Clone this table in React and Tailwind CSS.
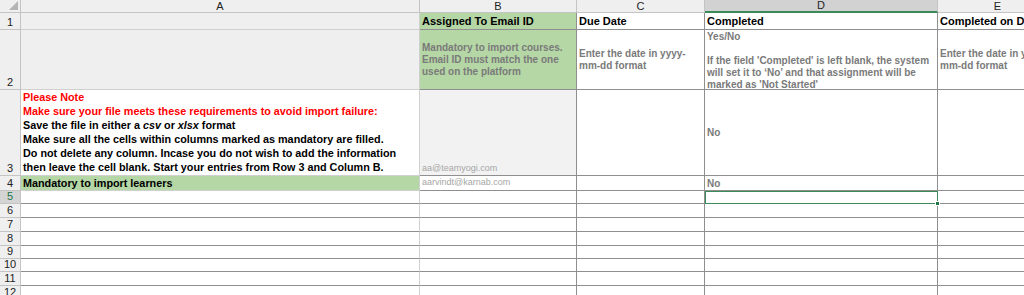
import React from "react";

const font = { fontFamily: '"Liberation Sans", Arial, sans-serif' };

const cols = ["A", "B", "C", "D", "E"];
const blankRows = [5, 6, 7, 8, 9, 10, 11, 12];

const Head = ({ children, active }) => (
  <div
    className={
      "flex items-center justify-center border-r border-b text-[11px] text-[#222] " +
      (active
        ? "bg-[#d2d2d2] border-r-[#c4c4c4] border-b-2 border-b-[#3b8a5a]"
        : "bg-[#efefef] border-[#c4c4c4]")
    }
  >
    {children}
  </div>
);

const RowNum = ({ n, active }) => (
  <div
    className={
      "flex items-end justify-center border-r border-b border-[#c4c4c4] text-[11px] leading-[13px] " +
      (active ? "bg-[#d4d4d4] text-[#217346]" : "bg-[#efefef] text-[#222]")
    }
  >
    {n}
  </div>
);

const Cell = ({ className = "", children }) => (
  <div className={"overflow-hidden whitespace-nowrap border-r border-b px-[2px] " + className}>{children}</div>
);

export default function App() {
  return (
    <div className="h-[295px] w-[1024px] overflow-hidden bg-white" style={font}>
      <div className="grid grid-cols-[21px_399px_157px_128px_233px_120px] grid-rows-[13px_17px_60px_86px_15px_13px_14px_14px_14px_13px_13px_14px_14px]">
        {/* column headers */}
        <div className="relative border-r border-b border-[#c4c4c4] bg-[#efefef]">
          <div className="absolute bottom-[2px] right-[2px] h-0 w-0 border-l-[9px] border-t-[9px] border-b-[9px] border-r-0 border-l-transparent border-t-transparent border-b-[#b4b4b4]" />
        </div>
        {cols.map((c) => (
          <Head key={c} active={c === "D"}>
            {c}
          </Head>
        ))}

        {/* row 1 */}
        <RowNum n={1} />
        <Cell className="bg-[#efefef] border-[#cfcfcf]" />
        <Cell className="flex items-end bg-[#b5d6a5] border-[#8f8f8f] text-[11px] font-bold leading-[15px] text-black">
          Assigned To Email ID
        </Cell>
        <Cell className="flex items-end border-[#8f8f8f] text-[11px] font-bold leading-[15px] text-black">Due Date</Cell>
        <Cell className="flex items-end border-[#8f8f8f] text-[11px] font-bold leading-[15px] text-black">Completed</Cell>
        <Cell className="flex items-end border-[#8f8f8f] text-[11px] font-bold leading-[15px] text-black">
          Completed on Date
        </Cell>

        {/* row 2 */}
        <RowNum n={2} />
        <Cell className="bg-[#efefef] border-[#cfcfcf]" />
        <Cell className="flex flex-col justify-center bg-[#b5d6a5] border-[#8f8f8f] text-[10px] font-bold leading-[12px] text-[#7a7a7a]">
          <div>Mandatory to import courses.</div>
          <div>Email ID must match the one</div>
          <div>used on the platform</div>
        </Cell>
        <Cell className="flex flex-col justify-center border-[#8f8f8f] text-[10px] font-bold leading-[12px] text-[#7a7a7a]">
          <div>Enter the date in yyyy-</div>
          <div>mm-dd format</div>
        </Cell>
        <Cell className="border-[#8f8f8f] pt-[1px] text-[10px] font-bold leading-[12px] text-[#7a7a7a]">
          <div>Yes/No</div>
          <div className="h-[12px]" />
          <div>If the field 'Completed' is left blank, the system</div>
          <div>will set it to ‘No’ and that assignment will be</div>
          <div>marked as 'Not Started'</div>
        </Cell>
        <Cell className="flex flex-col justify-center border-[#8f8f8f] text-[10px] font-bold leading-[12px] text-[#7a7a7a]">
          <div>Enter the date in yyyy-</div>
          <div>mm-dd format</div>
        </Cell>

        {/* row 3 */}
        <RowNum n={3} />
        <Cell className="flex flex-col justify-end border-[#d0d0d0] pb-[1px] text-[10.8px] font-bold leading-[14px] text-black">
          <div className="text-[#ff0000]">Please Note</div>
          <div className="text-[#ff0000]">Make sure your file meets these requirements to avoid import failure:</div>
          <div>
            Save the file in either a <i>csv</i> or <i>xlsx</i> format
          </div>
          <div>Make sure all the cells within columns marked as mandatory are filled.</div>
          <div>Do not delete any column. Incase you do not wish to add the information</div>
          <div>then leave the cell blank. Start your entries from Row 3 and Column B.</div>
        </Cell>
        <Cell className="flex items-end bg-[#f2f2f2] border-[#8f8f8f] text-[9px] leading-[13px] text-[#a6a6a6]">
          aa@teamyogi.com
        </Cell>
        <Cell className="border-[#8f8f8f]" />
        <Cell className="flex items-center border-[#8f8f8f] text-[10px] font-bold text-[#7a7a7a]">No</Cell>
        <Cell className="border-[#8f8f8f]" />

        {/* row 4 */}
        <RowNum n={4} />
        <Cell className="flex items-center bg-[#b5d6a5] border-[#d0d0d0] text-[10.8px] font-bold text-black">
          Mandatory to import learners
        </Cell>
        <Cell className="flex items-center border-[#8f8f8f] text-[9px] text-[#a6a6a6]">aarvindt@karnab.com</Cell>
        <Cell className="border-[#8f8f8f]" />
        <Cell className="flex items-center border-[#8f8f8f] text-[10px] font-bold text-[#7a7a7a]">No</Cell>
        <Cell className="border-[#8f8f8f]" />

        {/* blank rows */}
        {blankRows.map((n) => (
          <React.Fragment key={n}>
            <RowNum n={n} active={n === 5} />
            <Cell className="border-r-[#d0d0d0] border-b-[#8f8f8f]" />
            <Cell className="border-[#8f8f8f]" />
            <Cell className="border-[#8f8f8f]" />
            {n === 5 ? (
              <div className="relative border border-[#3b8a5a]">
                <div className="absolute -bottom-[3px] -right-[3px] h-[5px] w-[5px] border border-white bg-[#217346]" />
              </div>
            ) : (
              <Cell className="border-[#8f8f8f]" />
            )}
            <Cell className="border-[#8f8f8f]" />
          </React.Fragment>
        ))}
      </div>
    </div>
  );
}
